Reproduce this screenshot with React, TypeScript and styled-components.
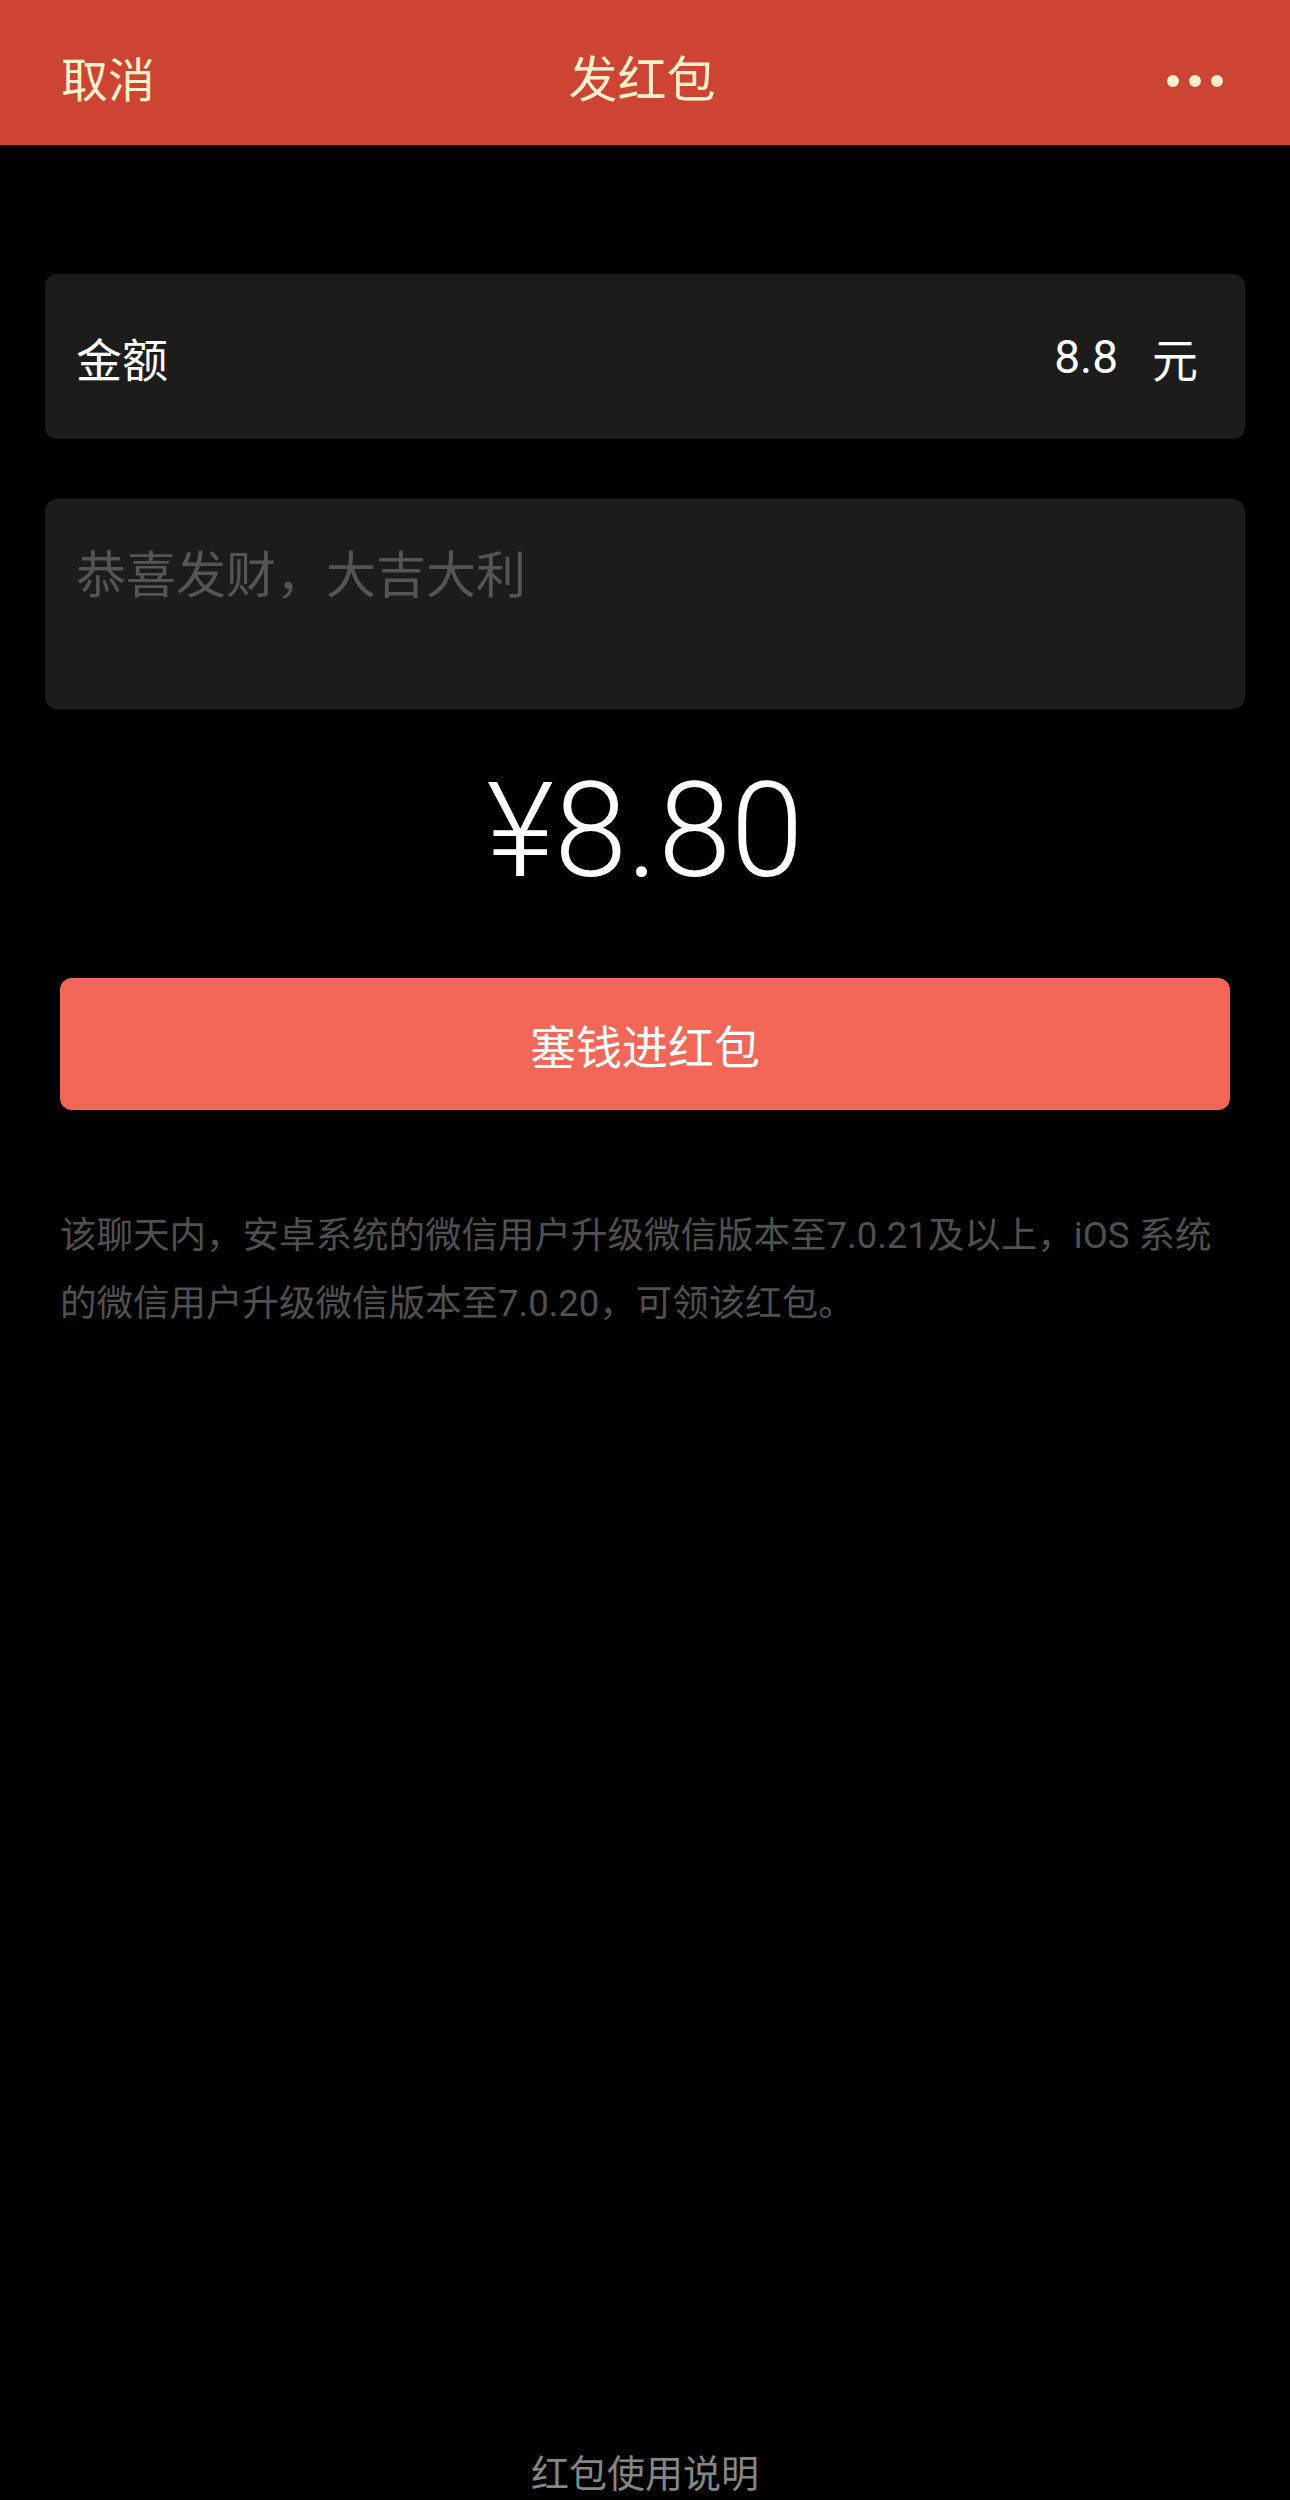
import React from "react";
import styled, { createGlobalStyle } from "styled-components";

const GlobalStyle = createGlobalStyle`
  html, body {
    margin: 0;
    padding: 0;
    background: #000000;
  }
  body {
    font-family: "Roboto", "Noto Sans CJK SC", sans-serif;
    -webkit-font-smoothing: antialiased;
  }
`;

const Page = styled.div`
  min-height: 2500px;
  display: flex;
  flex-direction: column;
  background: #000000;
`;

const Header = styled.header`
  height: 145px;
  box-sizing: border-box;
  padding: 16px 67px 0 61px;
  background: #cd4434;
  display: grid;
  grid-template-columns: 1fr auto 1fr;
  align-items: center;
  color: #fff0cc;
`;

const HeaderAction = styled.span`
  font-size: 47px;
  line-height: 1;
  justify-self: start;
`;

const Title = styled.h1`
  margin: 0;
  font-size: 49px;
  font-weight: 400;
  line-height: 1;
`;

const Dots = styled.div`
  justify-self: end;
  display: flex;
  gap: 10px;
`;

const Dot = styled.span`
  width: 12px;
  height: 12px;
  border-radius: 50%;
  background: #fff0cc;
`;

const Content = styled.main`
  padding: 0 45px;
  display: flex;
  flex-direction: column;
`;

const Card = styled.div<{ $top: number; $height: number }>`
  margin-top: ${(p) => p.$top}px;
  height: ${(p) => p.$height}px;
  box-sizing: border-box;
  background: #1c1c1c;
  border-radius: 12px;
`;

const AmountRow = styled(Card)`
  display: flex;
  align-items: center;
  justify-content: space-between;
  padding: 0 47px 0 31px;
  color: #ffffff;
`;

const Label = styled.span`
  font-size: 46px;
`;

const Value = styled.span`
  display: flex;
  align-items: center;
  gap: 34px;
  font-size: 46px;
`;

const MessageBox = styled(Card)`
  padding: 42px 31px;
`;

const Placeholder = styled.div`
  font-size: 50px;
  line-height: 1.4;
  color: #555555;
`;

const BigAmount = styled.div`
  margin-top: 57px;
  text-align: center;
  font-family: "Roboto", sans-serif;
  font-weight: 300;
  font-size: 131px;
  line-height: 1;
  color: #ffffff;
`;

const SubmitButton = styled.button`
  margin: 81px 15px 0;
  height: 132px;
  border: none;
  border-radius: 12px;
  background: #f26757;
  color: #ffffff;
  font-family: "Noto Sans CJK SC", sans-serif;
  font-size: 46px;
  cursor: pointer;
`;

const Notice = styled.p`
  margin: 92px 15px 0;
  font-size: 36.5px;
  line-height: 68px;
  color: #505050;
`;

const Footer = styled.footer`
  margin-top: auto;
  padding-bottom: 1px;
  text-align: center;
  font-size: 38px;
  line-height: 50px;
  color: #868686;
`;

export default function App() {
  return (
    <Page>
      <GlobalStyle />
      <Header>
        <HeaderAction>取消</HeaderAction>
        <Title>发红包</Title>
        <Dots>
          <Dot />
          <Dot />
          <Dot />
        </Dots>
      </Header>
      <Content>
        <AmountRow $top={129} $height={165}>
          <Label>金额</Label>
          <Value>
            <span>8.8</span>
            <span>元</span>
          </Value>
        </AmountRow>
        <MessageBox $top={60} $height={210}>
          <Placeholder>恭喜发财，大吉大利</Placeholder>
        </MessageBox>
        <BigAmount>¥8.80</BigAmount>
        <SubmitButton>塞钱进红包</SubmitButton>
        <Notice>
          该聊天内，安卓系统的微信用户升级微信版本至7.0.21及以上，iOS 系统
          <br />
          的微信用户升级微信版本至7.0.20，可领该红包。
        </Notice>
      </Content>
      <Footer>红包使用说明</Footer>
    </Page>
  );
}
